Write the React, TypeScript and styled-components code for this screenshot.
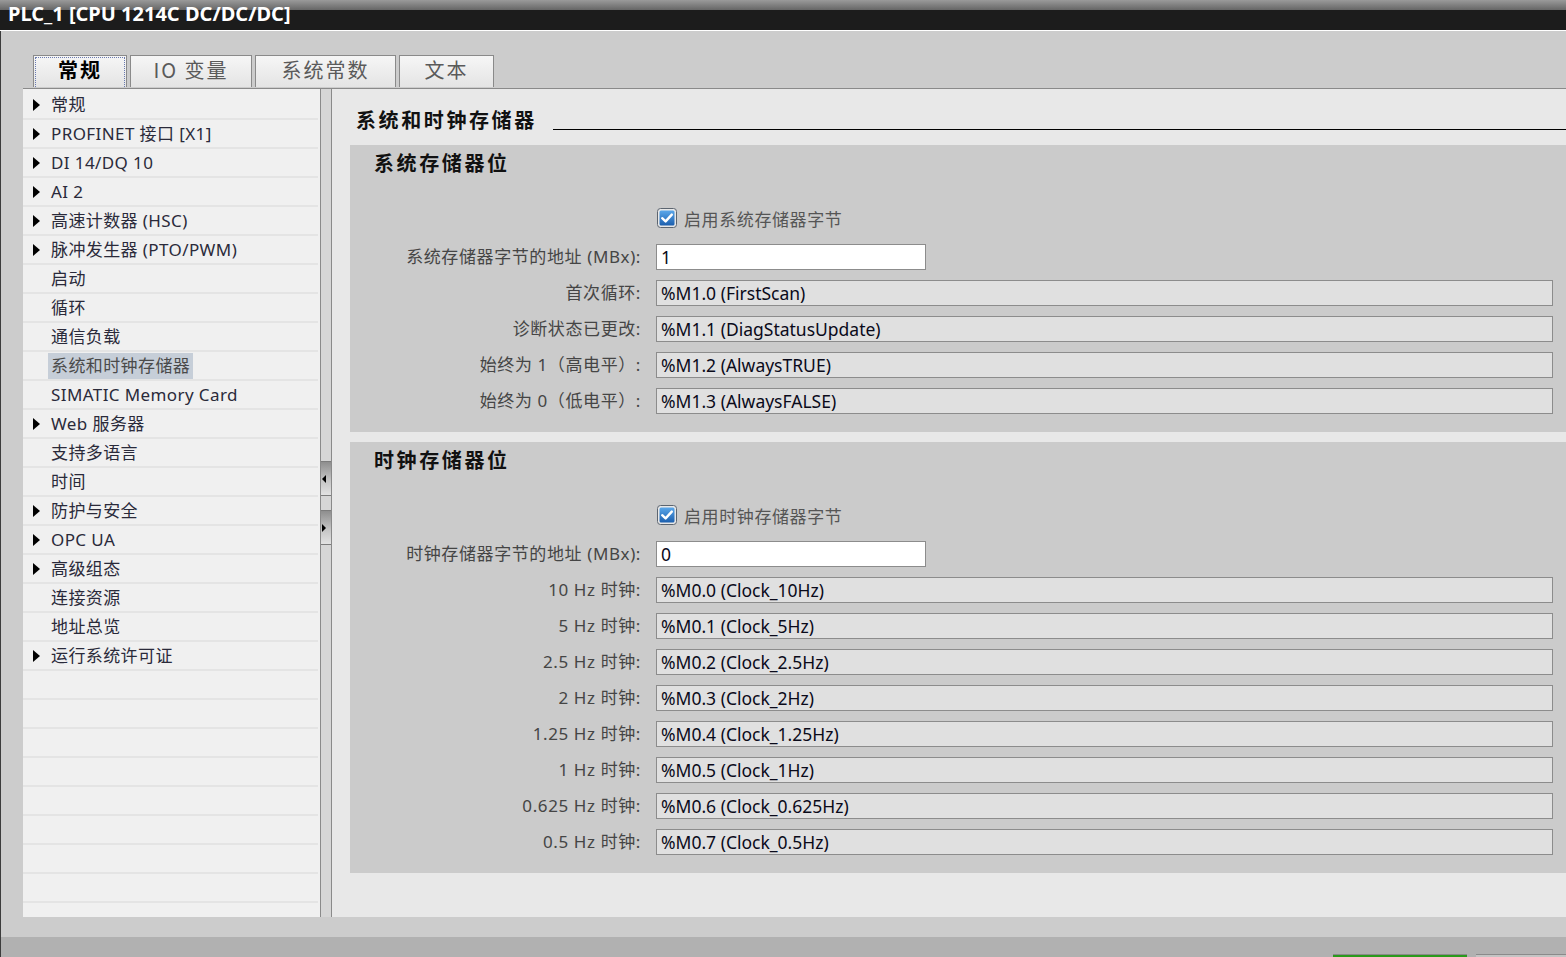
import React from "react";
import styled, { createGlobalStyle } from "styled-components";

const GlobalStyle = createGlobalStyle`
  html, body {
    margin: 0;
    padding: 0;
    background: #cccccc;
  }
  body {
    font-family: "Noto Sans", "Noto Sans CJK SC", sans-serif;
  }
`;

const treeItems = [
  { text: "常规", arrow: true },
  { text: "PROFINET 接口 [X1]", arrow: true },
  { text: "DI 14/DQ 10", arrow: true },
  { text: "AI 2", arrow: true },
  { text: "高速计数器 (HSC)", arrow: true },
  { text: "脉冲发生器 (PTO/PWM)", arrow: true },
  { text: "启动" },
  { text: "循环" },
  { text: "通信负载" },
  { text: "系统和时钟存储器", selected: true },
  { text: "SIMATIC Memory Card" },
  { text: "Web 服务器", arrow: true },
  { text: "支持多语言" },
  { text: "时间" },
  { text: "防护与安全", arrow: true },
  { text: "OPC UA", arrow: true },
  { text: "高级组态", arrow: true },
  { text: "连接资源" },
  { text: "地址总览" },
  { text: "运行系统许可证", arrow: true },
];

const tabs = [
  { text: "常规", width: 94, active: true },
  { text: "IO 变量", width: 122 },
  { text: "系统常数", width: 141 },
  { text: "文本", width: 95 },
];

const systemRows = [
  { label: "首次循环:", value: "%M1.0 (FirstScan)" },
  { label: "诊断状态已更改:", value: "%M1.1 (DiagStatusUpdate)" },
  { label: "始终为 1（高电平）:", value: "%M1.2 (AlwaysTRUE)" },
  { label: "始终为 0（低电平）:", value: "%M1.3 (AlwaysFALSE)" },
];

const clockRows = [
  { label: "10 Hz 时钟:", value: "%M0.0 (Clock_10Hz)" },
  { label: "5 Hz 时钟:", value: "%M0.1 (Clock_5Hz)" },
  { label: "2.5 Hz 时钟:", value: "%M0.2 (Clock_2.5Hz)" },
  { label: "2 Hz 时钟:", value: "%M0.3 (Clock_2Hz)" },
  { label: "1.25 Hz 时钟:", value: "%M0.4 (Clock_1.25Hz)" },
  { label: "1 Hz 时钟:", value: "%M0.5 (Clock_1Hz)" },
  { label: "0.625 Hz 时钟:", value: "%M0.6 (Clock_0.625Hz)" },
  { label: "0.5 Hz 时钟:", value: "%M0.7 (Clock_0.5Hz)" },
];

const Window = styled.div`
  width: 1566px;
  height: 957px;
  display: flex;
  flex-direction: column;
  overflow: hidden;
`;

const TitleBar = styled.div`
  flex: none;
  height: 31px;
  box-sizing: border-box;
  border-bottom: 1px solid #ffffff;
  background: linear-gradient(#9a9a9a 0, #666666 10px, #1c1c1c 10px);
  color: #ffffff;
  font: bold 20px "Noto Sans", sans-serif;
  line-height: 28px;
  padding-left: 8px;
`;

const Frame = styled.div`
  flex: 1;
  display: flex;
  flex-direction: column;
  background: #cccccc;
  border-left: 1px solid #3c3c3c;
  min-height: 0;
`;

const TabStrip = styled.div`
  flex: none;
  height: 57px;
  box-sizing: border-box;
  padding: 24px 0 0 32px;
  display: flex;
  gap: 3px;
  align-items: flex-start;
`;

const Tab = styled.div<{ $w: number; $active?: boolean }>`
  width: ${(p) => p.$w}px;
  height: 32px;
  box-sizing: border-box;
  border: 1px solid #8a8a8a;
  border-bottom: none;
  padding-bottom: 4px;
  background: linear-gradient(#f6f6f6, #e4e4e4);
  display: flex;
  align-items: center;
  justify-content: center;
  font-family: "Noto Sans CJK SC", sans-serif;
  font-size: 20px;
  letter-spacing: 2px;
  color: ${(p) => (p.$active ? "#000000" : "#5a5a5a")};
  font-weight: ${(p) => (p.$active ? "bold" : "normal")};
  position: relative;

  ${(p) =>
    p.$active &&
    `&::after {
      content: "";
      position: absolute;
      inset: 1px 1px 0 1px;
      border: 1px dotted #6a7ab0;
      border-bottom: none;
    }`}
`;

const Main = styled.div`
  flex: 1;
  min-height: 0;
  margin: 0 0 20px 22px;
  border-top: 1px solid #8a8a8a;
  display: flex;
`;

const Sidebar = styled.div`
  width: 297px;
  flex: none;
  background: #f0f0f0;
  padding-top: 2px;
  box-sizing: border-box;
  overflow: hidden;
`;

const TreeRow = styled.div`
  height: 29px;
  box-sizing: border-box;
  border-bottom: 2px solid #e4e4e4;
  display: flex;
  align-items: center;
  padding: 1px 0 0 10px;
  font-size: 17px;
  letter-spacing: 0.4px;
  color: #2a2a3a;
  margin-right: 2px;
`;

const Arrow = styled.span<{ $show?: boolean }>`
  width: 18px;
  flex: none;
  display: flex;
  align-items: center;

  &::before {
    content: "";
    display: ${(p) => (p.$show ? "block" : "none")};
    border-left: 7px solid #000000;
    border-top: 6px solid transparent;
    border-bottom: 6px solid transparent;
  }
`;

const TreeLabel = styled.span<{ $selected?: boolean }>`
  line-height: 26px;
  padding: 0 3px;
  margin-left: -3px;
  background: ${(p) => (p.$selected ? "#c6ced8" : "transparent")};
  color: ${(p) => (p.$selected ? "#4a4a4a" : "inherit")};
  white-space: nowrap;
`;

const Splitter = styled.div`
  width: 12px;
  flex: none;
  box-sizing: border-box;
  border-left: 1px solid #8a8a8a;
  border-right: 1px solid #8a8a8a;
  background: #d6d6d6;
  display: flex;
  flex-direction: column;
  justify-content: center;
  gap: 14px;
`;

const SplitButton = styled.div<{ $dir: "left" | "right" }>`
  height: 35px;
  box-sizing: border-box;
  border-top: 1px solid #7c7c7c;
  border-bottom: 1px solid #7c7c7c;
  background: linear-gradient(#8e8e8e, #c4c4c4 55%, #e2e2e2);
  display: flex;
  align-items: center;
  padding-left: 1px;

  &::before {
    content: "";
    ${(p) =>
      p.$dir === "left"
        ? "border-right: 4px solid #000;"
        : "border-left: 4px solid #000;"}
    border-top: 4px solid transparent;
    border-bottom: 4px solid transparent;
  }
`;

const Content = styled.div`
  flex: 1;
  background: #e8e8e8;
  padding-left: 18px;
  overflow: hidden;
`;

const Header = styled.div`
  display: flex;
  align-items: flex-end;
  margin-top: 19px;
  padding-left: 6px;
  height: 24px;
`;

const HeaderTitle = styled.div`
  font-family: "Noto Sans CJK SC", sans-serif;
  font-size: 20px;
  font-weight: bold;
  letter-spacing: 2.6px;
  line-height: 24px;
  color: #111111;
  white-space: nowrap;
`;

const HeaderRule = styled.div`
  flex: 1;
  border-bottom: 1px solid #000000;
  margin: 0 0 2px 16px;
`;

const Section = styled.div<{ $first?: boolean }>`
  background: #cbcbcb;
  margin-top: ${(p) => (p.$first ? 13 : 10)}px;
  padding: 6px 13px 18px 24px;
`;

const SectionTitle = styled.div`
  font-family: "Noto Sans CJK SC", sans-serif;
  font-size: 20px;
  font-weight: bold;
  letter-spacing: 2.6px;
  line-height: 24px;
  color: #111111;
`;

const Form = styled.div`
  margin-top: 30px;
  display: grid;
  grid-template-columns: 267px 1fr;
  column-gap: 15px;
  row-gap: 10px;
`;

const Label = styled.div`
  height: 26px;
  line-height: 26px;
  text-align: right;
  font-size: 17px;
  letter-spacing: 0.6px;
  color: #454545;
  white-space: nowrap;
`;

const CheckRow = styled.label`
  grid-column: 2;
  height: 26px;
  display: flex;
  align-items: center;
  gap: 7px;
  padding-left: 1px;
  margin-bottom: 3px;
  font-size: 17px;
  letter-spacing: 0.6px;
  color: #555555;
`;

const Field = styled.div<{ $editable?: boolean }>`
  height: 26px;
  box-sizing: border-box;
  border: 1px solid #8c8c8c;
  background: ${(p) => (p.$editable ? "#ffffff" : "#e0e0e0")};
  width: ${(p) => (p.$editable ? "270px" : "auto")};
  padding-left: 4px;
  line-height: 24px;
  font-size: 17.5px;
  color: #0a0a1a;
  white-space: nowrap;
`;

const StatusBar = styled.div`
  flex: none;
  height: 20px;
  background: #b1b1b1;
  display: flex;
  justify-content: flex-end;
  align-items: flex-end;
  gap: 9px;
`;

const StatusTab = styled.div<{ $color: string; $w: number }>`
  width: ${(p) => p.$w}px;
  height: 3px;
  box-sizing: border-box;
  border-top: 1px solid #8a8a8a;
  background: ${(p) => p.$color};
`;

const CheckBox = () => (
  <svg width="20" height="20" viewBox="0 0 20 20">
    <defs>
      <linearGradient id="cbfill" x1="0" y1="0" x2="0" y2="1">
        <stop offset="0" stopColor="#5aa7ea" />
        <stop offset="1" stopColor="#1c5fae" />
      </linearGradient>
    </defs>
    <rect x="0.5" y="0.5" width="19" height="19" rx="3" fill="#e8e8e8" stroke="#5c6570" />
    <rect x="2.5" y="2.5" width="15" height="15" rx="1.5" fill="url(#cbfill)" />
    <path d="M5.2 10.2 L8.6 13.4 L14.8 6.6" fill="none" stroke="#ffffff" strokeWidth="2.4" strokeLinecap="round" strokeLinejoin="round" />
  </svg>
);

type Row = { label: string; value: string };

const MemorySection = (props: {
  title: string;
  checkText: string;
  addrLabel: string;
  addr: string;
  rows: Row[];
  first?: boolean;
}) => (
  <Section $first={props.first}>
    <SectionTitle>{props.title}</SectionTitle>
    <Form>
      <CheckRow>
        <CheckBox />
        {props.checkText}
      </CheckRow>
      <Label>{props.addrLabel}</Label>
      <div>
        <Field $editable>{props.addr}</Field>
      </div>
      {props.rows.map((r) => (
        <React.Fragment key={r.value}>
          <Label>{r.label}</Label>
          <Field>{r.value}</Field>
        </React.Fragment>
      ))}
    </Form>
  </Section>
);

export default function App() {
  const emptyRows = Array.from({ length: 10 });

  return (
    <Window>
      <GlobalStyle />
      <TitleBar>PLC_1 [CPU 1214C DC/DC/DC]</TitleBar>
      <Frame>
        <TabStrip>
          {tabs.map((t) => (
            <Tab key={t.text} $w={t.width} $active={t.active}>
              {t.text}
            </Tab>
          ))}
        </TabStrip>
        <Main>
          <Sidebar>
            {treeItems.map((item) => (
              <TreeRow key={item.text}>
                <Arrow $show={item.arrow} />
                <TreeLabel $selected={item.selected}>{item.text}</TreeLabel>
              </TreeRow>
            ))}
            {emptyRows.map((_, i) => (
              <TreeRow key={"e" + i} />
            ))}
          </Sidebar>
          <Splitter>
            <SplitButton $dir="left" />
            <SplitButton $dir="right" />
          </Splitter>
          <Content>
            <Header>
              <HeaderTitle>系统和时钟存储器</HeaderTitle>
              <HeaderRule />
            </Header>
            <MemorySection
              first
              title="系统存储器位"
              checkText="启用系统存储器字节"
              addrLabel="系统存储器字节的地址 (MBx):"
              addr="1"
              rows={systemRows}
            />
            <MemorySection
              title="时钟存储器位"
              checkText="启用时钟存储器字节"
              addrLabel="时钟存储器字节的地址 (MBx):"
              addr="0"
              rows={clockRows}
            />
          </Content>
        </Main>
        <StatusBar>
          <StatusTab $w={134} $color="#2a9a1c" />
          <StatusTab $w={90} $color="#c4c4c4" />
        </StatusBar>
      </Frame>
    </Window>
  );
}
